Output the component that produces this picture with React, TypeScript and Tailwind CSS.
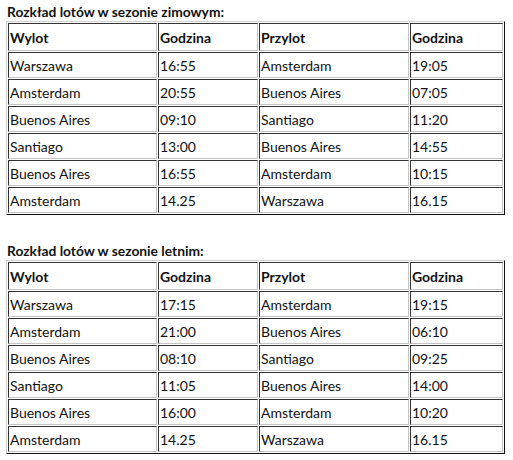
const winter = [
  ["Warszawa", "16:55", "Amsterdam", "19:05"],
  ["Amsterdam", "20:55", "Buenos Aires", "07:05"],
  ["Buenos Aires", "09:10", "Santiago", "11:20"],
  ["Santiago", "13:00", "Buenos Aires", "14:55"],
  ["Buenos Aires", "16:55", "Amsterdam", "10:15"],
  ["Amsterdam", "14.25", "Warszawa", "16.15"],
];

const summer = [
  ["Warszawa", "17:15", "Amsterdam", "19:15"],
  ["Amsterdam", "21:00", "Buenos Aires", "06:10"],
  ["Buenos Aires", "08:10", "Santiago", "09:25"],
  ["Santiago", "11:05", "Buenos Aires", "14:00"],
  ["Buenos Aires", "16:00", "Amsterdam", "10:20"],
  ["Amsterdam", "14.25", "Warszawa", "16.15"],
];

const cell =
  "px-[1px] py-0 text-left align-middle border border-t-[#333] border-l-[#333] border-b-[#c4c4c4] border-r-[#c4c4c4]";

function Schedule({ title, rows }: { title: string; rows: string[][] }) {
  return (
    <div>
      <p className="font-bold text-[13.8px] leading-[18px] pl-[7px] text-[#111]">{title}</p>
      <table className="ml-[6px] w-[499px] border-separate border-spacing-[1px] border border-t-[#d0d0d0] border-l-[#d0d0d0] border-b-[#111] border-r-[#111] table-fixed">
        <colgroup>
          <col className="w-[149px]" />
          <col className="w-[100px]" />
          <col className="w-[150px]" />
          <col />
        </colgroup>
        <thead>
          <tr>
            {["Wylot", "Godzina", "Przylot", "Godzina"].map((h, i) => (
              <th key={i} className={cell + " h-[28px] font-bold"}>
                {h}
              </th>
            ))}
          </tr>
        </thead>
        <tbody>
          {rows.map((r, i) => (
            <tr key={i}>
              {r.map((c, j) => (
                <td key={j} className={cell + " h-[26px]"}>
                  {c}
                </td>
              ))}
            </tr>
          ))}
        </tbody>
      </table>
    </div>
  );
}

export default function App() {
  return (
    <div className="w-[513px] h-[460px] bg-white pt-[3px] text-[14px] text-[#111] font-['Lato',sans-serif] flex flex-col gap-[27px]">
      <Schedule title="Rozkład lotów w sezonie zimowym:" rows={winter} />
      <Schedule title="Rozkład lotów w sezonie letnim:" rows={summer} />
    </div>
  );
}
